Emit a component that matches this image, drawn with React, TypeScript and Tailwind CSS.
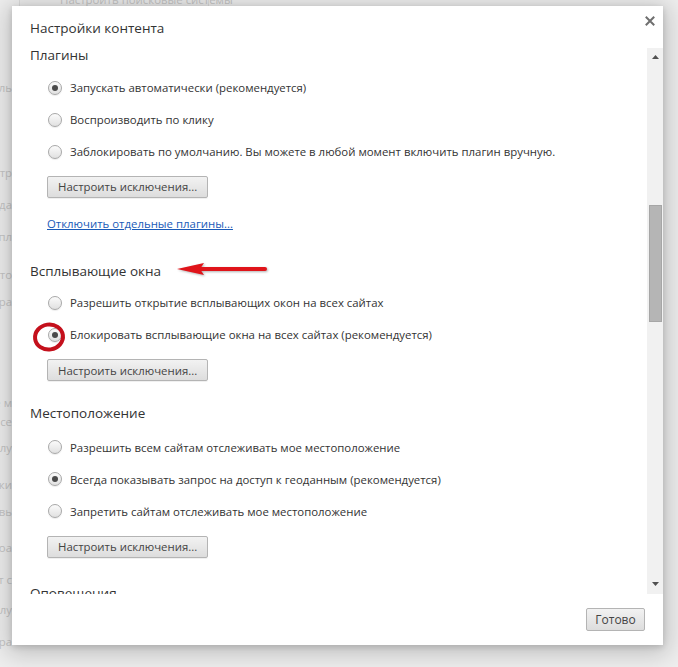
import React from "react";

function Radio({ checked }: { checked?: boolean }) {
  return (
    <span className="w-[14px] h-[14px] rounded-full border border-[#a8a8a8] bg-linear-to-b from-[#fbfbfb] to-[#e1e1e1] shadow-[0_1px_1px_rgba(0,0,0,0.08)] flex items-center justify-center shrink-0">
      {checked && <span className="w-[6px] h-[6px] rounded-full bg-[#4a4a4a]" />}
    </span>
  );
}

function Option({ label, checked, circled }: { label: string; checked?: boolean; circled?: boolean }) {
  return (
    <div className="relative h-[32px] flex items-center pl-[36px] gap-[8px] text-[11.4px] text-[#333] whitespace-nowrap">
      <Radio checked={checked} />
      <span>{label}</span>
      {circled && (
        <svg className="absolute left-[20px] top-[2px]" width="34" height="32" viewBox="0 0 34 32">
          <ellipse cx="17" cy="16" rx="14" ry="12.5" fill="none" stroke="#c4101c" strokeWidth="4" transform="rotate(-8 17 16)" />
        </svg>
      )}
    </div>
  );
}

function Btn({ children }: { children: React.ReactNode }) {
  return (
    <button className="h-[22px] px-[10px] rounded-[2px] border border-[#b4b4b4] bg-linear-to-b from-[#f2f2f2] to-[#dddddd] text-[11.4px] text-[#444] shadow-[0_1px_0_rgba(0,0,0,0.06)] leading-none">
      {children}
    </button>
  );
}

function Heading({ children }: { children: React.ReactNode }) {
  return <div className="pl-[18px] h-[20px] leading-[20px] text-[13.5px] text-[#333] whitespace-nowrap">{children}</div>;
}

const bgTexts: [string, string][] = [
  ["Показать ль", "mt-[76px]"],
  ["Фильтр", "mt-[69px]"],
  ["Отключить ада", "mt-[16px]"],
  ["пл", "mt-[16px]"],
  ["Авто", "mt-[22px]"],
  ["Пра", "mt-[11px]"],
  ["Ле м", "mt-[85px]"],
  ["Ансе", "mt-[3px]"],
  ["Ислу", "mt-[10px]"],
  ["Заки", "mt-[21px]"],
  ["Левь", "mt-[11px]"],
  ["Роа", "mt-[20px]"],
  ["Ит с", "mt-[16px]"],
  ["Услу", "mt-[14px]"],
  ["Пра", "mt-[16px]"],
];

export default function App() {
  return (
    <div className="relative w-[678px] h-[667px] overflow-hidden bg-[#efefef] font-['Open_Sans','Noto_Sans',sans-serif]">
      {/* background page */}
      <div className="flex flex-col">
        <div className="ml-[19px] -mt-[10px] w-[190px] h-[20px] border border-[#dcdcdc] bg-[#ececec] text-[11.4px] text-[#c4c4c4] pl-[40px] leading-[18px] whitespace-nowrap">
          Настроить поисковые системы
        </div>
        <div className="w-[12px] flex flex-col -mt-[6px]">
          {bgTexts.map(([t, m], i) => (
            <div key={i} className={`${m} h-[16px] flex justify-end overflow-hidden text-[11.4px] leading-[16px] text-[#c6c6c6] whitespace-nowrap`}>
              <span className="shrink-0">{t}</span>
            </div>
          ))}
        </div>
      </div>

      {/* dialog */}
      <div className="absolute left-[12px] top-[6px] w-[651px] h-[639px] bg-white flex flex-col shadow-[0_4px_23px_5px_rgba(0,0,0,0.2),0_2px_6px_rgba(0,0,0,0.15)]">
        <div className="h-[42px] shrink-0 flex items-start justify-between">
          <div className="pl-[18px] pt-[12px] h-[20px] leading-[20px] text-[13.5px] text-[#333] box-content">Настройки контента</div>
          <div className="mt-[10px] mr-[8px] w-[10px] h-[10px] flex items-center justify-center">
            <svg width="10" height="10" viewBox="0 0 10 10">
              <path d="M1.5 1.5 L8.5 8.5 M8.5 1.5 L1.5 8.5" stroke="#6f6f6f" strokeWidth="2" strokeLinecap="square" />
            </svg>
          </div>
        </div>

        <div className="h-[546px] shrink-0 flex">
          <div className="flex-1 overflow-hidden">
            <div className="-mt-[3px] flex flex-col">
              <Heading>Плагины</Heading>
              <div className="mt-[7px]">
                <Option label="Запускать автоматически (рекомендуется)" checked />
                <Option label="Воспроизводить по клику" />
                <Option label="Заблокировать по умолчанию. Вы можете в любой момент включить плагин вручную." />
              </div>
              <div className="mt-[5px] ml-[35px]">
                <Btn>Настроить исключения...</Btn>
              </div>
              <div className="mt-[18px] ml-[35px] h-[16px] leading-[16px] text-[11.4px] text-[#1a5bb8] underline">
                Отключить отдельные плагины...
              </div>

              <div className="relative mt-[29px]">
                <Heading>Всплывающие окна</Heading>
                <svg className="absolute left-[165px] top-[0px] drop-shadow-[1px_1px_1px_rgba(0,0,0,0.3)]" width="92" height="16" viewBox="0 0 92 16">
                  <path d="M88 8 L22 8" stroke="#e0141a" strokeWidth="4" strokeLinecap="round" />
                  <polygon points="0,8 27,2 23,8 27,14" fill="#e0141a" />
                </svg>
              </div>
              <div className="mt-[6px]">
                <Option label="Разрешить открытие всплывающих окон на всех сайтах" />
                <Option label="Блокировать всплывающие окна на всех сайтах (рекомендуется)" checked circled />
              </div>
              <div className="mt-[6px] ml-[35px]">
                <Btn>Настроить исключения...</Btn>
              </div>

              <div className="mt-[22px]">
                <Heading>Местоположение</Heading>
              </div>
              <div className="mt-[8px]">
                <Option label="Разрешить всем сайтам отслеживать мое местоположение" />
                <Option label="Всегда показывать запрос на доступ к геоданным (рекомендуется)" checked />
                <Option label="Запретить сайтам отслеживать мое местоположение" />
              </div>
              <div className="mt-[6px] ml-[35px]">
                <Btn>Настроить исключения...</Btn>
              </div>

              <div className="mt-[25px]">
                <Heading>Оповещения</Heading>
              </div>
            </div>
          </div>

          {/* scrollbar */}
          <div className="w-[16px] shrink-0 bg-[#f1f1f1] flex flex-col">
            <div className="h-[17px] flex items-center justify-center">
              <svg width="7" height="4" viewBox="0 0 7 4"><polygon points="0,4 3.5,0 7,4" fill="#505050" /></svg>
            </div>
            <div className="mt-[140px] ml-[2px] w-[13px] h-[117px] bg-[#b5b5b5] border border-[#a6a6a6]" />
            <div className="flex-1" />
            <div className="h-[17px] mb-[2px] flex items-center justify-center">
              <svg width="7" height="4" viewBox="0 0 7 4"><polygon points="0,0 7,0 3.5,4" fill="#505050" /></svg>
            </div>
          </div>
        </div>

        <div className="flex-1 flex justify-end items-start pt-[14px] pr-[18px]">
          <button className="h-[23px] w-[59px] rounded-[2px] border border-[#b4b4b4] bg-linear-to-b from-[#f2f2f2] to-[#dddddd] text-[12px] text-[#444] leading-none">
            Готово
          </button>
        </div>
      </div>
    </div>
  );
}
